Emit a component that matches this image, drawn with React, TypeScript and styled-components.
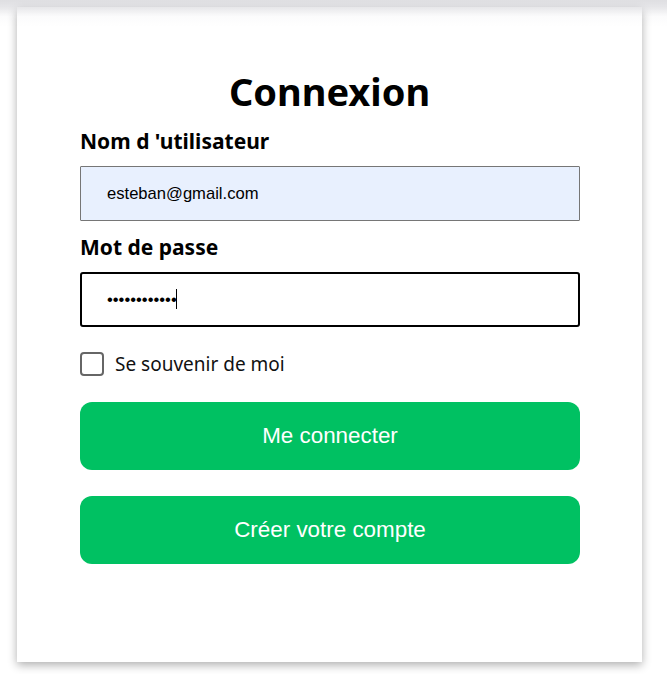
import React from "react";
import styled, { createGlobalStyle } from "styled-components";

const GlobalStyle = createGlobalStyle`
  html, body {
    margin: 0;
    padding: 0;
    background: #ffffff;
  }
  body {
    font-family: "Noto Sans", "Open Sans", sans-serif;
  }
  * { box-sizing: border-box; }
`;

const TopShade = styled.div`
  position: fixed;
  top: 0;
  left: 0;
  right: 0;
  height: 26px;
  pointer-events: none;
  z-index: 5;
  background: linear-gradient(
    to bottom,
    rgba(196, 196, 202, 0.55) 0px,
    rgba(200, 200, 206, 0.45) 7px,
    rgba(220, 220, 226, 0.12) 16px,
    rgba(255, 255, 255, 0) 26px
  );
`;

const Page = styled.div`
  padding: 7px 0 0 17px;
  width: 667px;
  height: 674px;
`;

const Card = styled.main`
  width: 625px;
  height: 655px;
  background: #ffffff;
  box-shadow: 0 3px 9px rgba(0, 0, 0, 0.32);
  padding: 60px 63px 0;
  display: flex;
  flex-direction: column;
`;

const Title = styled.h1`
  margin: 0 0 14px;
  text-align: center;
  font-family: "Noto Sans", sans-serif;
  font-weight: 700;
  font-size: 38px;
  line-height: 48px;
  color: #000;
`;

const Form = styled.form`
  display: flex;
  flex-direction: column;
`;

const Label = styled.label`
  display: block;
  font-family: "Noto Sans", sans-serif;
  font-weight: 700;
  font-size: 21px;
  line-height: 24px;
  color: #000;
  margin-bottom: 13px;
`;

const FieldWrap = styled.div<{ $gapAfter?: number }>`
  position: relative;
  margin-bottom: ${(p) => p.$gapAfter ?? 15}px;
`;

const TextInput = styled.input<{ $focused?: boolean; $autofilled?: boolean }>`
  display: block;
  width: 500px;
  height: 55px;
  padding: 0 0 0 ${(p) => (p.$focused ? 25 : 26)}px;
  font-family: "Liberation Sans", Arial, sans-serif;
  font-size: 16.6px;
  color: #000;
  background: ${(p) => (p.$autofilled ? "#e8f0fe" : "#ffffff")};
  border: ${(p) => (p.$focused ? "2px solid #000" : "1px solid #767676")};
  border-radius: ${(p) => (p.$focused ? "3px" : "1px")};
  outline: none;
`;

const Caret = styled.span`
  position: absolute;
  left: 96px;
  top: 17px;
  width: 1px;
  height: 20px;
  background: #000;
`;

const CheckRow = styled.label`
  display: flex;
  align-items: center;
  gap: 11px;
  margin: 10px 0 26px;
  font-family: "Noto Sans", sans-serif;
  font-size: 19px;
  line-height: 24px;
  color: #111;
  cursor: pointer;
`;

const CheckBox = styled.input`
  appearance: none;
  -webkit-appearance: none;
  margin: 0;
  width: 24px;
  height: 24px;
  border: 2px solid #666;
  border-radius: 4px;
  background: #fff;
`;

const Button = styled.button<{ $gapAfter?: number }>`
  display: block;
  width: 500px;
  height: 68px;
  margin-bottom: ${(p) => p.$gapAfter ?? 0}px;
  border: none;
  border-radius: 12px;
  background: #00c162;
  color: #ffffff;
  font-family: "Liberation Sans", Arial, sans-serif;
  font-size: 22.4px;
  cursor: pointer;
`;

export default function App() {
  return (
    <>
      <GlobalStyle />
      <TopShade />
      <Page>
        <Card>
          <Title>Connexion</Title>
          <Form onSubmit={(e) => e.preventDefault()}>
            <Label htmlFor="user">Nom d 'utilisateur</Label>
            <FieldWrap $gapAfter={14}>
              <TextInput id="user" type="text" defaultValue="esteban@gmail.com" $autofilled />
            </FieldWrap>
            <Label htmlFor="pass">Mot de passe</Label>
            <FieldWrap>
              <TextInput id="pass" type="password" defaultValue="motdepasse12" $focused />
              <Caret />
            </FieldWrap>
            <CheckRow>
              <CheckBox type="checkbox" />
              Se souvenir de moi
            </CheckRow>
            <Button type="submit" $gapAfter={26}>Me connecter</Button>
            <Button type="button">Créer votre compte</Button>
          </Form>
        </Card>
      </Page>
    </>
  );
}
